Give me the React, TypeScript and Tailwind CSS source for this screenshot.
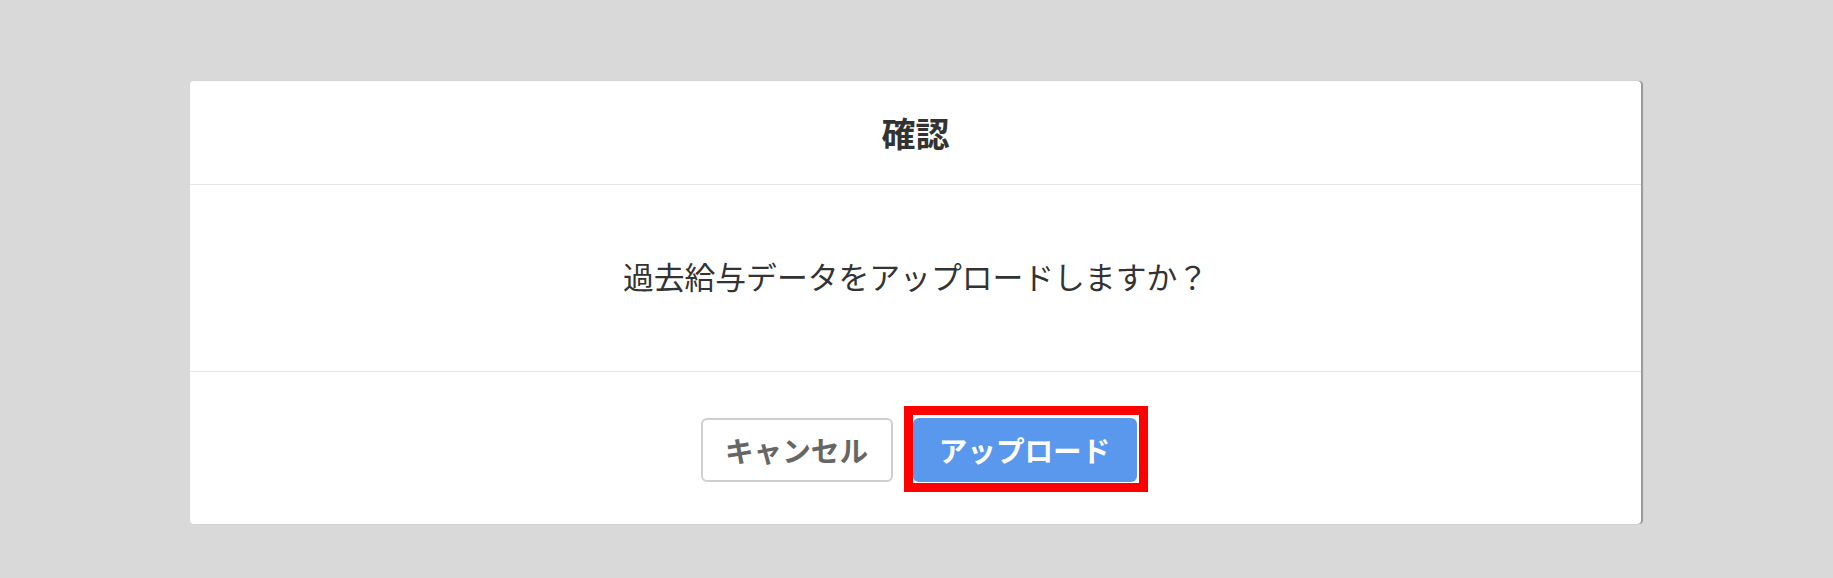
export default function App() {
  return (
    <div
      className="min-h-[578px] w-full bg-[#d9d9d9] pt-[81px]"
      style={{ fontFamily: '"Noto Sans CJK JP", "Noto Sans", sans-serif' }}
    >
      <div className="ml-[190px] w-[1451px] rounded-[4px] bg-white text-[#333] shadow-[2px_0_1px_rgba(0,0,0,0.3)]">
        {/* Header */}
        <div className="flex h-[104px] items-center justify-center border-b border-[#e5e5e5]">
          <h2 className="text-[34px] font-bold leading-none">確認</h2>
        </div>

        {/* Body */}
        <div className="flex h-[187px] items-center justify-center border-b border-[#e5e5e5] pb-[4px]">
          <p className="text-[30.8px] leading-none">
            過去給与データをアップロードしますか？
          </p>
        </div>

        {/* Footer */}
        <div className="flex h-[152px] items-center justify-center gap-[20px] pl-[6px] pt-[4px]">
          <button className="flex h-[64px] w-[192px] items-center justify-center rounded-[6px] border-2 border-[#cfcfcf] bg-white text-[28.6px] font-bold text-[#666]">
            キャンセル
          </button>
          <div className="relative">
            <button className="flex h-[64px] w-[224px] items-center justify-center rounded-[6px] bg-[#5a98ee] text-[28.6px] font-bold text-white">
              アップロード
            </button>
            <div className="pointer-events-none absolute -top-[12px] -right-[11px] -bottom-[10px] -left-[9px] border-[9px] border-[#ff0000]" />
          </div>
        </div>
      </div>
    </div>
  );
}
